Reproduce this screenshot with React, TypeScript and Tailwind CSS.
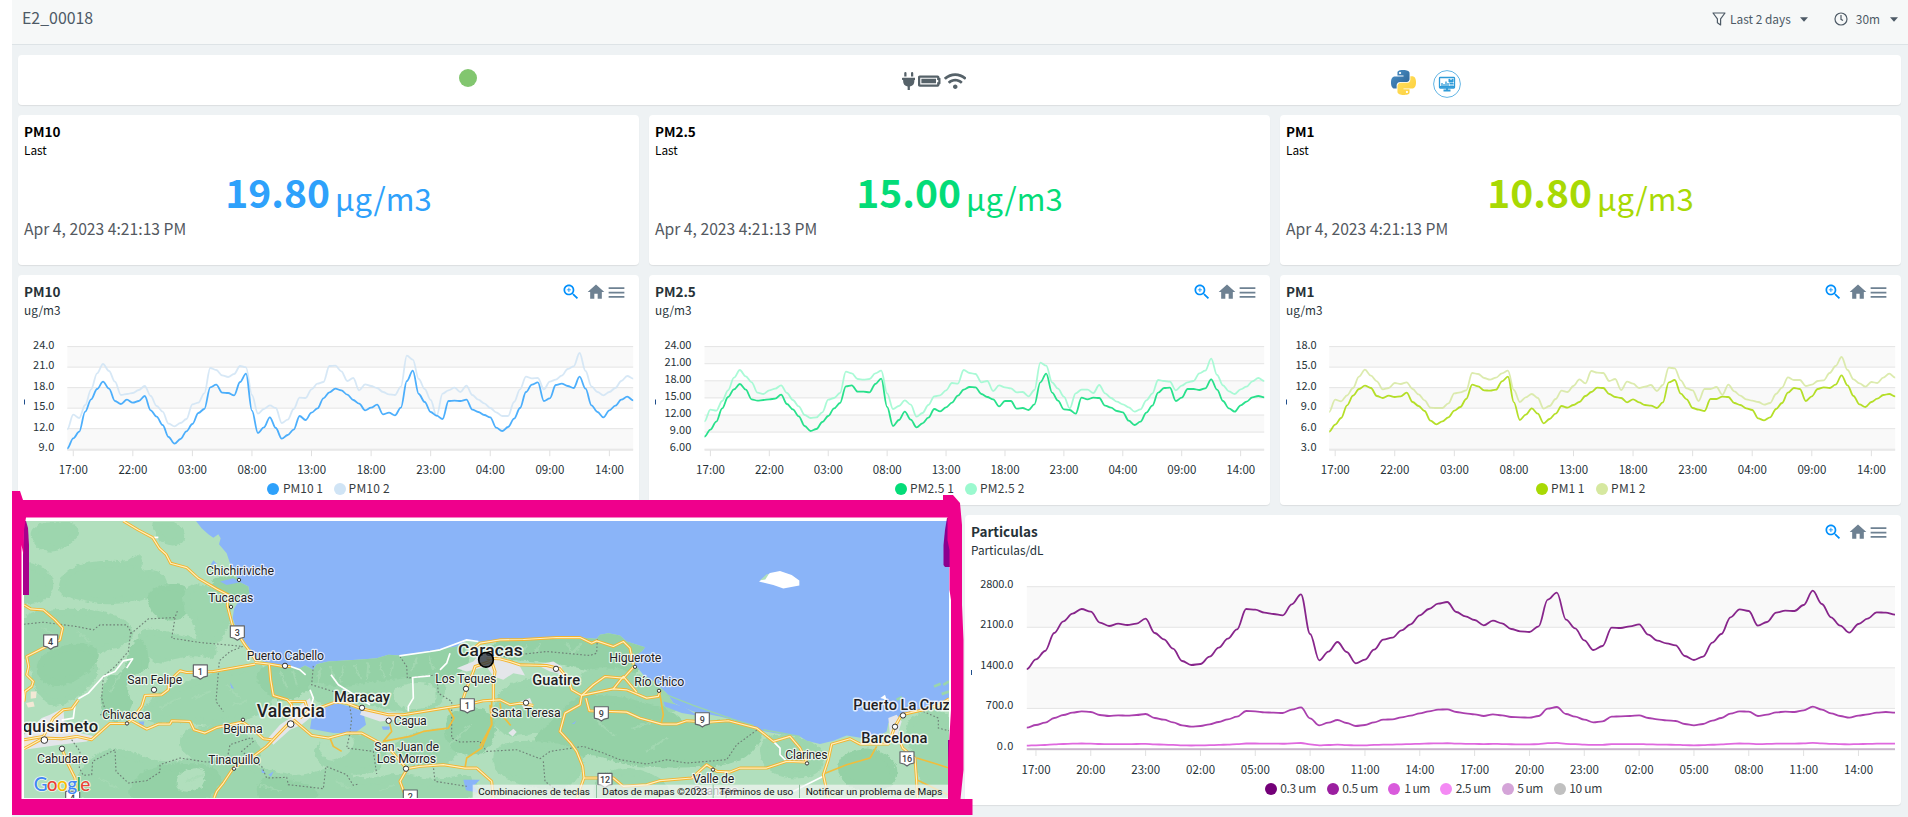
import React from 'react';
import { FaPlug, FaBatteryFull, FaWifi } from 'react-icons/fa';

const FONT = "font-['Noto_Sans_CJK_SC','Noto_Sans',sans-serif]";

/* Sample heights are in thirds of a pixel, measured down from the plot origin. */
const pm10a = [550,520,500,440,403,372,350,371,408,417,404,413,408,393,436,455,480,516,536,522,499,477,444,432,367,359,383,384,391,351,326,437,504,487,457,489,521,510,494,453,465,443,430,400,382,371,376,389,405,416,436,428,419,448,443,451,428,348,317,387,411,441,452,462,408,407,408,404,434,441,450,457,488,498,486,461,429,381,359,352,408,400,360,356,363,369,335,371,421,441,457,436,422,404,395,406];
const pm10b = [493,449,459,420,373,325,297,318,350,390,387,384,375,363,393,423,440,476,484,474,462,418,413,385,309,315,331,336,327,303,307,390,446,432,421,429,474,464,432,398,399,373,356,351,303,302,319,348,339,376,358,363,369,381,388,390,365,272,284,342,372,405,453,386,376,368,381,362,390,404,415,429,442,453,453,411,373,335,340,339,373,350,344,332,312,304,264,318,364,381,391,381,369,348,333,341];
const pm25a = [515,494,470,430,396,373,357,374,403,407,405,403,401,389,417,433,454,483,498,492,471,453,430,414,364,361,380,380,382,357,341,426,483,465,440,464,487,475,458,432,439,427,413,392,374,366,367,387,396,403,424,408,408,431,429,435,418,352,326,383,407,433,435,446,398,403,398,399,422,428,438,442,467,480,470,443,422,383,369,368,408,398,372,372,375,370,343,374,408,430,440,421,410,397,393,397];
const pm25b = [469,434,437,408,376,338,315,334,352,383,387,376,371,361,384,405,424,450,459,457,442,404,399,384,320,325,342,344,342,325,317,385,432,423,406,419,455,444,420,394,391,376,354,356,315,324,327,352,348,378,361,367,370,382,381,394,375,293,302,352,371,395,430,385,374,374,384,360,385,399,410,418,427,440,433,406,386,345,348,350,376,362,352,348,325,317,281,330,361,379,387,373,365,349,339,348];
const pm1a = [500,479,459,421,392,372,362,369,393,399,392,396,394,383,411,423,438,467,478,469,457,437,426,402,359,364,376,377,374,349,335,412,465,449,430,446,475,462,446,423,428,420,411,393,381,368,369,387,396,399,412,403,412,420,422,429,412,352,345,386,403,429,434,438,402,402,395,396,414,420,430,435,460,466,457,432,414,383,369,372,408,394,372,367,369,359,331,361,393,418,426,411,401,390,387,394];
const pm1b = [441,404,409,391,369,335,314,332,349,373,369,354,357,352,372,388,406,428,429,429,415,385,382,376,324,327,339,344,338,325,317,375,411,397,387,399,431,423,402,377,381,363,343,355,318,323,324,348,342,375,350,356,369,365,360,378,360,308,310,346,370,376,408,372,372,366,389,359,379,392,403,407,411,419,414,387,368,337,345,345,363,359,348,346,324,303,276,315,343,355,365,351,354,338,326,338];
const part3 = [507,478,453,399,364,341,327,335,368,378,371,375,371,356,399,418,446,483,495,492,470,443,416,388,327,329,338,342,346,313,283,402,481,455,426,456,490,479,449,419,413,391,373,346,327,311,306,336,349,360,376,362,370,387,394,396,379,299,278,359,385,421,450,438,383,384,379,373,404,422,430,436,468,480,470,428,402,352,328,333,377,366,338,332,333,315,272,312,352,377,398,372,356,337,338,344];
const part5 = [683,675,668,654,645,638,634,636,645,648,646,647,645,642,654,659,667,676,680,678,673,666,658,650,633,634,637,638,639,629,622,655,676,668,660,669,678,675,667,659,658,652,647,640,634,629,628,636,640,643,648,643,646,651,652,653,648,626,621,642,650,659,667,664,650,649,648,646,654,658,661,663,672,676,672,662,654,641,634,635,648,644,637,635,636,631,620,629,640,648,653,647,643,638,636,638];
const part10 = part5.map((v) => 745 - (745 - v) * 0.13);

type Series = { color: string; data: number[]; opacity?: number };
type Legend = { label: string; color: string; cx: number; tx: number; w: number };
type ChartProps = {
  title: string;
  unit: string;
  width: number;
  height: number;
  x0: number;
  x1: number;
  top: number;
  bottom: number;
  shift: number;
  yLabels: string[];
  yRight: number;
  yWidth: number;
  yDrop: number;
  xLabels: string[];
  every: number;
  series: Series[];
  legend: Legend[];
  legendY: number;
  mark: number;
};

function smooth(data: number[], x0: number, x1: number, shift: number) {
  const step = (x1 - x0) / (data.length - 1);
  const pt = (i: number) => [x0 + i * step, data[i] / 3 - shift];
  let d = `M${pt(0)[0].toFixed(2)} ${pt(0)[1].toFixed(2)}`;
  for (let i = 1; i < data.length; i++) {
    const [ax, ay] = pt(i - 1);
    const [bx, by] = pt(i);
    const k = step * 0.35;
    d += `C${(ax + k).toFixed(2)} ${ay.toFixed(2)} ${(bx - k).toFixed(2)} ${by.toFixed(2)} ${bx.toFixed(2)} ${by.toFixed(2)}`;
  }
  return d;
}

function Card({ className = '', children }: { className?: string; children?: React.ReactNode }) {
  return <section className={`rounded-[4px] bg-white shadow-[0_1px_1px_rgba(0,0,0,0.08)] ${className}`}>{children}</section>;
}

function Toolbox() {
  return (
    <div className="flex items-start pt-[7px] pr-[12.5px]">
      <svg className="mr-[5px] size-5 fill-[#008ffb]" viewBox="0 0 24 24">
        <path d="M15.5 14h-.79l-.28-.27C15.41 12.59 16 11.11 16 9.5 16 5.91 13.09 3 9.5 3S3 5.91 3 9.5 5.91 16 9.5 16c1.61 0 3.09-.59 4.23-1.57l.27.28v.79l5 4.99L20.49 19l-4.99-5zm-6 0C7.01 14 5 11.99 5 9.5S7.01 5 9.5 5 14 7.01 14 9.5 11.99 14 9.5 14zM12 10h-2v2H9v-2H7V9h2V7h1v2h2v1z" />
      </svg>
      <svg className="size-5 fill-[#6e8192]" viewBox="0 0 24 24">
        <path d="M10 20v-6h4v6h5v-8h3L12 3 2 12h3v8z" />
      </svg>
      <svg className="size-[21px] fill-[#6e8192]" viewBox="0 0 24 24">
        <path d="M3 18h18v-2H3v2zm0-5h18v-2H3v2zm0-7v2h18V6H3z" />
      </svg>
    </div>
  );
}

function ChartCard(p: ChartProps) {
  const rows = p.yLabels.length - 1;
  const rowH = (p.bottom - p.top) / rows;
  const step = (p.x1 - p.x0) / 95;
  return (
    <Card className="flex flex-col overflow-hidden">
      <div className="flex h-[50px] shrink-0 justify-between pl-[6px] text-[#263238]">
        <div className="flex flex-col">
          <h2 className="mt-[6px] text-[13.500px] leading-[20px] font-bold">{p.title}</h2>
          <p className="text-[11.800px] leading-[17px]">{p.unit}</p>
        </div>
        <Toolbox />
      </div>
      <svg width={p.width} height={p.height - 50} viewBox={`0 50 ${p.width} ${p.height - 50}`}>
        {p.yLabels.map((_, i) =>
          i < rows && i % 2 === 0 ? (
            <rect key={i} x={p.x0} y={p.top + i * rowH} width={p.x1 - p.x0} height={rowH} fill="#f9f9f9" />
          ) : null,
        )}
        {p.yLabels.map((_, i) => (
          <line key={i} x1={p.x0} x2={p.x1} y1={p.top + i * rowH} y2={p.top + i * rowH} stroke="#e4e4e4" />
        ))}
        <line x1={p.x0} x2={p.x1} y1={p.bottom + 0.9} y2={p.bottom + 0.9} stroke="#e0e0e0" />
        {p.xLabels.map((l, i) => {
          const x = p.x0 + step * (1 + i * p.every);
          return (
            <g key={i}>
              <line x1={x} x2={x} y1={p.bottom + 1} y2={p.bottom + 7} stroke="#e0e0e0" />
              <text x={x + 0.1} y={p.bottom + 24.6} fontSize="11.5" textAnchor="middle" textLength="29" fill="#263238">{l}</text>
            </g>
          );
        })}
        {p.yLabels.map((l, i) => (
          <text key={i} x={p.yRight} y={p.top + i * rowH + p.yDrop} fontSize="11" textAnchor="end" textLength={l.length * p.yWidth} fill="#263238">{l}</text>
        ))}
        <rect x="6" y={p.mark} width="1" height="5" fill="#1f4e8c" />
        {p.series.map((s, i) => (
          <path key={i} d={smooth(s.data, p.x0, p.x1, p.shift)} fill="none" stroke={s.color} strokeWidth="1.8" strokeOpacity={s.opacity ?? 0.85} />
        ))}
        {p.legend.map((l) => (
          <g key={l.label}>
            <circle cx={l.cx} cy={p.legendY} r="6" fill={l.color} />
            <text x={l.tx} y={p.legendY + 4} fontSize="12" textLength={l.w} fill="#373d3f">{l.label}</text>
          </g>
        ))}
      </svg>
    </Card>
  );
}

function ValueCard({ title, value, color }: { title: string; value: string; color: string }) {
  return (
    <Card className="flex flex-col px-[6px] text-black">
      <h2 className="mt-[6px] text-[13.500px] leading-[20px] font-bold">{title}</h2>
      <p className="text-[11.800px] leading-[17px]">Last</p>
      <div className={`mt-[13px] flex h-[40px] items-baseline justify-center ${color}`}>
        <span className="text-[39px] leading-[40px] font-bold">{value}</span>
        <span className="relative top-[3px] ml-[5px] text-[31px] leading-[40px]">µg/m3</span>
      </div>
      <p className="mt-[6px] text-[15.700px] leading-[24px] text-[#54595f]">Apr 4, 2023 4:21:13 PM</p>
    </Card>
  );
}

const R = 1440;
const off = (s: string) =>
  s.split(' ').map((q) => { const [x, y] = q.split(','); return `${+x + R},${y}`; }).join(' ');

/* Closed curve through the midpoints of a polygon's sides. */
function blob(points: string) {
  const p = points.split(' ').map((q) => q.split(',').map(Number));
  const mid = (a: number[], b: number[]) => `${(a[0] + b[0]) / 2} ${(a[1] + b[1]) / 2}`;
  let d = `M${mid(p[p.length - 1], p[0])}`;
  p.forEach((q, i) => { d += `Q${q[0]} ${q[1]} ${mid(q, p[(i + 1) % p.length])}`; });
  return d + 'Z';
}

const greens: [string, string][] = [
  ['#9dd6ae', '200,260 290,235 390,240 420,210 410,270 470,262 500,300 450,330 380,345 300,350 220,330 180,320'],
  ['#94d1a6', '450,330 490,305 560,310 560,370 540,398 480,395 455,360'],
  ['#9dd6ae', '465,108 530,120 548,160 520,175 480,160 470,130'],
  ['#9dd6ae', '560,300 650,320 690,340 680,420 640,480 600,470 590,400 560,380'],
  ['#94d1a6', '640,280 740,290 760,325 700,345 650,310'],
  ['#9dd6ae', '60,230 140,260 155,310 120,345 60,350'],
  ['#9dd6ae', '90,130 200,115 240,140 180,190 120,190'],
  ['#9dd6ae', '60,395 180,380 300,385 390,420 390,470 250,510 300,560 220,640 150,660 110,600 100,520 60,500'],
  ['#9dd6ae', '420,430 540,460 640,480 640,520 500,540 430,500'],
  ['#94d1a6', '120,520 220,480 300,500 260,560 180,600 120,580'],
  ['#94d1a6', '315,590 390,540 400,480 430,470 440,560 400,620 370,700 310,700'],
  ['#9dd6ae', '440,650 560,600 650,570 745,550 810,550 820,640 780,680 720,700 640,720 560,700 440,710'],
  ['#94d1a6', '760,550 935,540 1000,535 1090,512 1200,508 1330,495 1400,480 1400,540 1330,580 1200,600 1100,615 1000,620 930,600 870,640 810,630'],
  ['#9dd6ae', '925,590 1000,620 1130,600 1230,590 1320,570 1330,620 1300,670 1200,675 1090,645 960,660'],
  ['#94d1a6', '1480,470 1680,455 1780,460 1850,438 1940,480 1920,510 1900,580 1760,545 1640,520 1500,515'],
  ['#9dd6ae', '1520,590 1740,590 1750,640 1710,710 1600,740 1510,745 1480,700'],
  ['#9dd6ae', '1740,560 1880,560 1980,610 2040,680 1900,670 1750,640'],
  ['#94d1a6', '1730,640 1840,640 2000,680 2060,730 2200,710 2290,730 2250,800 2180,835 1980,840 1860,830 1760,790 1710,840 1580,790 1680,700'],
  ['#9dd6ae', '270,830 350,790 480,850 640,820 760,850 900,890 1000,850 1080,900 1200,870 1300,900 1420,870 1430,960 220,960 240,880'],
  ['#94d1a6', '430,860 560,840 660,860 640,930 500,960 380,940'],
  ['#94d1a6', '780,880 900,900 960,930 900,960 780,950'],
  ['#9dd6ae', '550,740 680,730 790,790 750,840 640,840 550,800'],
  ['#9dd6ae', '930,790 1050,745 1160,790 1130,860 1000,860'],
  ['#9dd6ae', '1170,770 1360,730 1370,830 1240,840'],
  ['#94d1a6', '1350,680 1480,680 1470,790 1390,810 1340,760'],
  ['#9dd6ae', '1490,770 1750,790 1730,890 1640,910 1490,870'],
  ['#9dd6ae', '2290,750 2450,775 2470,850 2380,880 2290,840'],
  ['#94d1a6', '2510,830 2600,790 2690,840 2670,910 2550,910'],
  ['#9dd6ae', '2720,700 2860,670 2860,940 2780,910 2740,800'],
  ['#9dd6ae', '1790,880 1900,850 2010,910 1970,960 1790,960'],
  ['#b1dfbd', '380,600 440,560 560,520 650,530 560,560 460,620 420,670'],
  ['#b1dfbd', '960,765 1060,755 1040,805 980,825'],
  ['#b1dfbd', '320,500 380,500 360,560 320,560'],
  ['#b1dfbd', '540,870 610,855 600,905 540,915'],
  ['#b1dfbd', '1180,610 1300,600 1300,660 1200,665'],
];

const borders = [
  '72,418 130,412 230,425 280,435 300,420 380,420 395,445 445,402 525,398 533,376',
  '525,400 515,460 600,473 700,482 728,485 690,500 658,528 652,600 648,650 670,680',
  '392,442 385,500 345,545 310,575 305,640 320,690 300,690',
  '215,765 240,800 238,850 250,872 275,870 278,830 345,795 348,860 385,895 440,888 480,862 480,840 540,820 620,832 680,830 690,780 755,758 760,770 725,800 785,845 800,880 860,878 865,900 970,912 978,845 1040,870 1060,902 1075,898',
  '940,543 935,600 1000,620 1045,640 1055,700 1050,745 1040,790 1120,800 1130,868',
  '1200,515 1220,545 1222,580 1310,570 1315,625 1355,650 1355,760 1380,772 1440,770 1460,800 1550,795 1620,822 1650,800 1750,785 1810,805 1860,825 1940,838 2000,825 2060,835 2180,825 2210,780 2272,735',
  '1500,516 1640,500 1770,512 1790,505 1792,460',
  '1630,830 1635,890 1680,925',
  '2770,680 2815,700 2815,730 2847,738',
  '1240,845 1300,845 1305,890 1400,905',
];

const roads = [
  '370,108 415,135 458,158 478,190 498,208 512,235 560,248 595,280 650,312 685,330 682,362 697,420 712,445 735,480 750,500 768,528',
  '765,538 640,560 560,563 540,558 505,592 505,615 485,630 435,632 425,665 395,705 380,716 330,716 275,765 230,755 185,762 130,760 72,792',
  '395,708 440,733 475,718 510,718 515,708 570,710 582,735 615,745 650,728 728,712 760,735 790,762 815,765',
  '765,533 810,538 850,545 872,545',
  '808,540 812,585 820,632 862,645 875,660 870,700',
  '865,650 915,650 925,680 900,700',
  '930,680 1005,652 1040,655 1085,672 1165,690 1210,690 1345,668 1400,660 1450,648 1500,645 1530,660 1560,655 1600,662',
  '870,712 800,785 760,815 700,850 670,895 650,920 642,940',
  '880,705 935,752 985,760 1040,745 1085,745 1150,780 1175,800 1220,852 1260,845 1330,840 1395,850 1430,850 1475,890 1480,940',
  '1220,855 1200,890 1215,930 1235,940',
  '72,360 92,372 130,375 165,405 188,430 180,465 125,492 80,515 86,545 80,570 100,590 95,605 75,620 72,650',
  '72,765 130,755 160,700 190,675 215,672 235,645',
  '185,790 205,840 225,880 230,940',
  off('-30,500 0,475 60,465 130,464 230,458 300,458 335,475 350,468 400,485 430,470 450,490 460,540'),
  off('20,520 60,522 90,530 120,540 200,542 240,552 258,575 268,592 275,615 305,632 400,612 440,615 500,640 535,635 540,618'),
  off('305,632 340,600 375,575 430,580 462,545'),
  off('400,612 430,575 470,622'),
  off('318,640 328,678 440,682 480,700 545,718 590,718 620,708 690,712 745,708 830,730 880,770 930,755 960,790 980,832'),
  off('305,632 300,660 255,685 240,740 272,775 290,800 308,845 312,880 290,940'),
  off('312,880 400,880 430,905 500,900 540,888 635,880 680,840 710,860 750,862 780,850 860,850 920,830 980,832'),
  off('1045,940 1030,870 1045,825 1055,778 1110,762 1140,778 1225,778 1245,725 1265,690 1330,675 1380,660 1407,642'),
  off('1262,775 1268,790 1305,820 1310,890 1312,940'),
  '1470,530 1425,545 1420,560 1400,610 1390,640',
  '1475,530 1485,560 1480,600 1480,650',
];

const thinRoads = [
  '1475,650 1475,720 1445,790 1400,820 1395,850',
  '1165,700 1175,740 1150,770 1230,755 1270,740 1345,730 1362,700 1345,672',
  '990,760 1000,785 1025,800',
  off('540,630 550,690 543,718'),
  off('1310,820 1360,835 1407,850'),
  off('1030,868 1100,840 1170,820 1190,785'),
  off('1310,885 1407,932'),
  off('30,660 35,720 0,785'),
  off('60,655 65,690 92,722'),
];

const whiteRoads = [
  '235,642 265,625 310,575 345,560 370,528 398,522 380,550',
  '185,706 220,700 225,660',
  '1198,513 1290,500 1320,495 1400,465 1435,470',
  '993,570 1015,600 1060,628 1110,660',
  '872,545 900,555 917,570',
  '1350,505 1340,535 1320,555',
  '1225,680 1225,665 1240,640 1238,578 1290,573',
  '930,615 940,640 925,690',
  '455,158 475,157',
  off('880,770 900,790 900,810 920,830'),
  off('1030,875 970,905 930,925'),
];

const places: [string, number, number, number, number][] = [
  ['Chichiriviche', 618, 270, 204, 37], ['Tucacas', 625, 352, 135, 37], ['Puerto Cabello', 740, 526, 232, 37],
  ['San Felipe', 382, 597, 165, 37], ['Chivacoa', 307, 703, 145, 37], ['Bejuma', 670, 745, 118, 37],
  ['Tinaquillo', 625, 838, 155, 37], ['Cabudare', 111, 835, 153, 37], ['Cagua', 1181, 721, 99, 37],
  ['San Juan de', 1123, 798, 194, 37], ['Los Morros', 1130, 835, 178, 37], ['Los Teques', 1306, 594, 183, 37],
  ['Higuerote', 1828, 531, 156, 37], ['Río Chico', 1903, 603, 150, 37], ['Santa Teresa', 1474, 696, 208, 37],
  ['Clarines', 2356, 822, 127, 37], ['Valle de', 2078, 894, 125, 37], ['Guanape', 2078, 931, 135, 37],
];
const cities: [string, number, number, number, number][] = [
  ['Maracay', 1002, 651, 168, 44], ['Valencia', 770, 696, 204, 53], ['quisimeto', 68, 742, 227, 50],
  ['Caracas', 1374, 514, 194, 52], ['Guatire', 1597, 600, 143, 44], ['Barcelona', 2584, 774, 198, 44],
  ['Puerto La Cruz', 2560, 675, 290, 44],
];
const dots: [number, number, number][] = [
  [717, 285, 5], [693, 366, 5], [855, 543, 8], [462, 615, 8], [381, 716, 5], [729, 705, 5], [872, 718, 10], [702, 852, 5],
  [133, 766, 10], [186, 792, 8], [1086, 669, 8], [1166, 708, 8], [1218, 852, 8], [1398, 612, 8], [1668, 552, 8],
  [1905, 546, 5], [1977, 618, 5], [1578, 654, 8], [2421, 836, 5], [2139, 855, 5], [2709, 692, 8], [2685, 726, 8],
];
const shields: [string, number, number][] = [
  ['4', 152, 470], ['3', 712, 443], ['1', 601, 560], ['1', 1402, 662], ['9', 1804, 686], ['9', 2107, 704],
  ['16', 2721, 821], ['12', 1815, 886], ['2', 1231, 936], ['4', 218, 940],
];

function MapView() {
  return (
    <svg width="925" height="277" viewBox="72 108 2775 832" preserveAspectRatio="none" className="block" fontFamily="Roboto, sans-serif">
      <rect x="72" y="108" width="2775" height="832" fill="#8ab4f8" />
      <filter id="rough" x="0" y="0" width="1" height="1">
        <feTurbulence type="fractalNoise" baseFrequency="0.07" numOctaves="3" seed="4" />
        <feDisplacementMap in="SourceGraphic" scale="16" xChannelSelector="R" yChannelSelector="G" />
      </filter>
      <clipPath id="land">
        <path d="M60 100L588 108L605 130L625 148L640 158L655 148L662 160L657 178L680 205L690 235L705 260L715 290L745 305L748 325L718 345L702 372L698 400L712 440L740 480L765 510L790 530L850 542L900 550L915 542L940 555L950 538L985 530L1083 524L1130 520L1165 510L1200 512L1300 497L1370 485L1400 466L1440 470L1500 463L1680 456L1740 458L1790 462L1800 450L1825 445L1860 452L1880 470L1935 487L1925 500L1905 512L1905 540L1930 570L1965 592L2000 625L2020 655L2080 680L2160 695L2200 706L2270 735L2320 745L2400 755L2420 768L2460 778L2500 768L2540 752L2600 762L2640 752L2660 740L2665 715L2690 700L2730 682L2790 668L2820 652L2847 645V950H60Z" />
      </clipPath>
      <g clipPath="url(#land)">
        <rect x="60" y="100" width="2800" height="850" fill="#b1dfbd" />
        <g filter="url(#rough)">
          {greens.map(([c, pts], i) => (
            <path key={i} d={blob(pts)} fill={c} stroke={c} strokeWidth="20" strokeLinejoin="round" />
          ))}
          <g stroke="#a6dab5" strokeWidth="6" fill="none" opacity="0.7" strokeLinecap="round">
            <path d="M840 560l20 45M880 560l10 40M960 555l-8 40M990 548l16 44M1030 545l-8 46M1065 540l16 44M1105 535l-4 48M1140 535l12 40M1180 530l-8 44M1250 520l-16 40M1290 515l8 36M1580 480l-20 30M1620 480l-14 26M1700 475l16 30M1740 480l-18 22M130 430l30 20M230 440l40 30M330 620l30-50M480 670l60-30M580 640l50-20M680 600l40 40M700 660l40-10M1780 700l60 50M1900 730l60-20M2000 760l-60 40M1350 780l60-60M560 890l50-20M780 900l60 20M1010 890l40 20M1180 900l-40 20M300 880l50 30" />
          </g>
        </g>
      </g>
      <polygon points="935,700 950,685 965,665 1010,655 1060,668 1090,682 1098,720 1065,745 1000,745 930,732" fill="#8ab4f8" />
      <g fill="#8ab4f8">
        <path d="M632 240l8-14 12 12zM660 290l40-10 20 12-40 8zM415 710h18l-4 22zM690 592l12 20-8-2zM785 852l12 14-12-2zM805 870l16-10-8 16zM1390 885h50l-20 20 18 20-40-8zM1145 725h26l-4 10h-18zM1990 650l60 15 45 28-50-8-50-20zM1715 718l14-10-6 10z" />
      </g>
      <path d="M2000 630L2080 662L2200 704L2260 722M2290 735L2400 755" stroke="#9ad5ac" strokeWidth="4" fill="none" />
      <path d="M2802 605l20-8M2830 600l17-10M2825 628l22-8M2690 645l16-8" stroke="#9ad5ac" strokeWidth="8" />
      <g fill="#e4e6ea">
        <polygon points="805,760 840,720 870,700 895,665 930,640 942,690 905,720 870,735 820,780" />
        <polygon points="72,750 125,700 150,690 190,670 195,735 285,755 260,770 180,780 72,795" />
        <polygon points="1370,550 1420,530 1440,505 1490,515 1540,530 1560,545 1575,572 1540,565 1510,585 1480,575 1460,545 1400,560" />
        <polygon points="1080,690 1090,665 1130,680 1200,685 1190,705 1140,710" />
        <polygon points="1610,540 1660,530 1685,545 1690,570 1650,560" />
        <polygon points="1560,650 1590,640 1600,665 1570,670" />
        <polygon points="1525,745 1540,732 1550,742 1538,755" />
        <polygon points="2665,700 2690,690 2705,710 2690,760 2710,775 2670,750" />
      </g>
      <polygon points="2641,640 2655,630 2660,645" fill="#fff" />
      <g fill="#f3e8d5">
        <polygon points="92,620 110,620 108,640 92,642" />
        <polygon points="78,655 100,650 104,665 84,668" />
        <polygon points="72,765 98,772 90,792 72,795" />
      </g>
      <polygon points="2277,290 2310,264 2340,258 2375,270 2398,287 2398,302 2350,311 2320,300" fill="#fff" />
      <polygon points="2280,286 2300,268 2306,268 2296,284" fill="#b1dfbd" />
      <g fill="none" stroke="#6f8177" strokeWidth="3.4" strokeDasharray="5 6">
        {borders.map((b, i) => <polyline key={i} points={b} />)}
      </g>
      <g fill="none" strokeLinejoin="round">
        {whiteRoads.map((b, i) => <polyline key={i} points={b} stroke="#fff" strokeWidth="5" />)}
        {thinRoads.map((b, i) => <polyline key={i} points={b} stroke="#f0bd3c" strokeWidth="5" />)}
        {roads.map((b, i) => <polyline key={i} points={b} stroke="#f3b32f" strokeWidth="9" />)}
        {roads.map((b, i) => <polyline key={i} points={b} stroke="#fff0bd" strokeWidth="3.6" />)}
      </g>
      {dots.map(([x, y, r], i) => <circle key={i} cx={x} cy={y} r={r} fill="#fff" stroke="#333" strokeWidth="3" />)}
      {shields.map(([t, x, y], i) => (
        <g key={i}>
          <path d={`M${x - 21} ${y - 20}h42v34l-12 3l-9 6l-9 -6l-12 -3z`} fill="#fff" stroke="#5f6368" strokeWidth="3.5" strokeLinejoin="round" />
          <text x={x} y={y + 10} fontSize="27" textAnchor="middle" fill="#3c4043" fontWeight="500">{t}</text>
        </g>
      ))}
      <g fill="#1f2124" stroke="#fff" strokeOpacity="0.75" strokeLinejoin="round" style={{ paintOrder: 'stroke' }}>
        {places.map(([t, x, y, w, s]) => <text key={t} x={x} y={y} fontSize={s} textLength={w} strokeWidth="7">{t}</text>)}
        {cities.map(([t, x, y, w, s]) => <text key={t} x={x} y={y} fontSize={s} textLength={w} fontWeight="500" strokeWidth="9">{t}</text>)}
      </g>
      <circle cx="1458" cy="525" r="22" fill="#263038" fillOpacity="0.78" stroke="#000" strokeWidth="5" />
      <text x="101" y="920" fontSize="57" textLength="170" fontFamily="Lato, sans-serif" stroke="#fff" strokeWidth="5" strokeOpacity="0.8" style={{ paintOrder: 'stroke' }} fontWeight="500">
        <tspan fill="#4285f4">G</tspan><tspan fill="#ea4335">o</tspan><tspan fill="#fbbc04">o</tspan><tspan fill="#4285f4">g</tspan><tspan fill="#34a853">l</tspan><tspan fill="#ea4335">e</tspan>
      </text>
      <rect x="1418" y="900" width="1429" height="40" fill="#f5f5f5" fillOpacity="0.7" />
      <g fill="#8fbf9f"><rect x="1788" y="900" width="3" height="40" /><rect x="2138" y="900" width="3" height="40" /><rect x="2397" y="900" width="3" height="40" /></g>
      <g fill="#111" fontSize="30">
        <text x="1435" y="930" textLength="335">Combinaciones de teclas</text>
        <text x="1807" y="930" textLength="315">Datos de mapas ©2023</text>
        <text x="2158" y="930" textLength="222">Términos de uso</text>
        <text x="2417" y="930" textLength="410">Notificar un problema de Maps</text>
      </g>
    </svg>
  );
}

function Highlight() {
  return (
    <svg className="pointer-events-none absolute top-0 left-0" width="980" height="817" viewBox="0 0 980 817">
      <path d="M24 521L26 521L28 528L29 545V595H23V545Z" fill="#a8008c" />
      <path d="M947 518H950V567H945L943.5 565V545L945 530Z" fill="#8b008f" />
      <path d="M948 740H950V799H948Z" fill="#a0008c" />
      <path
        fillRule="evenodd"
        fill="#ef008c"
        d="M12 491H20L23 500H943V495H953L960 503L962 525V605L963.500 640V770L960.500 799H972.500V815H12ZM26 517.500L24 530L23.500 555L21.500 545V799H948V765L949.500 735L951 710V600L949.500 590L949.500 550L947.500 540V517.500Z"
      />
    </svg>
  );
}

function StatusBar() {
  return (
    <Card className="flex h-[50px] items-start">
      <div className="mt-[14px] ml-[440.500px] size-[18px] rounded-full bg-[#82c66f]" />
      <div className="mt-[17px] ml-[425px] flex gap-[3px] text-[#566269]">
        <FaPlug className="h-[18px] w-[13.500px]" />
        <FaBatteryFull className="h-[18px] w-[22.500px]" />
        <FaWifi className="h-[18px] w-[22.500px]" />
      </div>
      <svg className="mt-[15px] ml-[425px]" width="25" height="27" viewBox="0 0 24 26">
        <defs>
          <linearGradient id="pyb" x1="0" y1="0" x2="1" y2="1"><stop offset="0" stopColor="#4b93cc" /><stop offset="1" stopColor="#2b5f8e" /></linearGradient>
          <linearGradient id="pyy" x1="0" y1="0" x2="1" y2="1"><stop offset="0" stopColor="#ffe061" /><stop offset="1" stopColor="#fdcf3a" /></linearGradient>
        </defs>
        <path fill="url(#pyb)" d="M14.25.18l.9.2.73.26.59.3.45.32.34.34.25.34.16.33.1.3.04.26.02.2-.01.13V8.5l-.05.63-.13.55-.21.46-.26.38-.3.31-.33.25-.35.19-.35.14-.33.1-.3.07-.26.04-.21.02H8.77l-.69.05-.59.14-.5.22-.41.27-.33.32-.27.35-.2.36-.15.37-.1.35-.07.32-.04.27-.02.21v3.06H3.17l-.21-.03-.28-.07-.32-.12-.35-.18-.36-.26-.36-.36-.35-.46-.32-.59-.28-.73-.21-.88-.14-1.05-.05-1.23.06-1.22.16-1.04.24-.87.32-.71.36-.57.4-.44.42-.33.42-.24.4-.16.36-.1.32-.05.24-.01h.16l.06.01h8.16v-.83H6.18l-.01-2.75-.02-.37.05-.34.11-.31.17-.28.25-.26.31-.23.38-.2.44-.18.51-.15.58-.12.64-.1.71-.06.77-.04.84-.02 1.27.05zm-6.3 1.98l-.23.33-.08.41.08.41.23.34.33.22.41.09.41-.09.33-.22.23-.34.08-.41-.08-.41-.23-.33-.33-.22-.41-.09-.41.09z" />
        <path fill="url(#pyy)" d="M21.04 6.11l.28.06.32.12.35.18.36.27.36.35.35.47.32.59.28.73.21.88.14 1.04.05 1.23-.06 1.23-.16 1.04-.24.86-.32.71-.36.57-.4.45-.42.33-.42.24-.4.16-.36.09-.32.05-.24.02-.16-.01h-8.22v.82h5.84l.01 2.76.02.36-.05.34-.11.31-.17.29-.25.25-.31.24-.38.2-.44.17-.51.15-.58.13-.64.09-.71.07-.77.04-.84.01-1.27-.04-1.07-.14-.9-.2-.73-.25-.59-.3-.45-.33-.34-.34-.25-.34-.16-.33-.1-.3-.04-.25-.02-.2.01-.13v-5.34l.05-.64.13-.54.21-.46.26-.38.3-.32.33-.24.35-.2.35-.14.33-.1.3-.06.26-.04.21-.02.13-.01h5.84l.69-.05.59-.14.5-.21.41-.28.33-.32.27-.35.2-.36.15-.36.1-.35.07-.32.04-.28.02-.21V6.07h2.09l.14.01zm-6.47 14.25l-.23.33-.08.41.08.41.23.33.33.23.41.08.41-.08.33-.23.23-.33.08-.41-.08-.41-.23-.33-.33-.23-.41-.08-.41.08z" />
      </svg>
      <svg className="mt-[15px] ml-[17px]" width="28" height="28" viewBox="0 0 28 28" fill="none">
        <circle cx="14" cy="14" r="13.400" stroke="#62b5e5" />
        <rect x="6.500" y="7.500" width="15" height="10.500" rx="0.800" stroke="#2f9bd8" strokeWidth="1.300" />
        <path d="M6.500 16.800h15M14 18v2.500M10.500 20.500h7" stroke="#2f9bd8" strokeWidth="1.800" />
        <path d="M9 16v-3M11 16v-2M13 16v-4.500M15 16v-3" stroke="#2f9bd8" strokeWidth="1.300" />
        <path d="M16 9v3h4v-3l-2 1.500zM16.500 13.500h4M16.500 15h4" stroke="#2f9bd8" fill="#2f9bd8" />
      </svg>
    </Card>
  );
}

const fiveHours = ['17:00', '22:00', '03:00', '08:00', '13:00', '18:00', '23:00', '04:00', '09:00', '14:00'];
const threeHours = ['17:00', '20:00', '23:00', '02:00', '05:00', '08:00', '11:00', '14:00', '17:00', '20:00', '23:00', '02:00', '05:00', '08:00', '11:00', '14:00'];
const small = { unit: 'ug/m3', width: 621, height: 230, top: 71.6, bottom: 174.2, shift: 10, every: 10, xLabels: fiveHours, legendY: 214, mark: 124.5, yDrop: 1.9 };

export default function App() {
  return (
    <div className={`relative h-[817px] w-[1908px] overflow-hidden bg-white pl-[12px] ${FONT}`}>
      <div className="flex h-full flex-col bg-[#eef2f4]">
        <header className="flex h-[45px] shrink-0 items-start border-b border-[#dde3e6] bg-[#f6f8f8] pl-[10px] text-[#4d5a66]">
          <h1 className="mt-[6px] text-[15.900px] leading-[24px]">E2_00018</h1>
          <div className="ml-auto flex h-[38px] items-center pr-[10px] text-[11.900px]">
            <svg className="mr-[4px]" width="14" height="14" viewBox="0 0 14 14" fill="none" stroke="currentColor" strokeWidth="1.200" strokeLinejoin="round"><path d="M1 1h12L8.600 6.800V13L5.400 10.800V6.800z" /></svg>
            <span>Last 2 days</span>
            <svg className="ml-[9px]" width="8" height="5" viewBox="0 0 8 5" fill="currentColor"><path d="M0 .3h8L4 4.700z" /></svg>
            <svg className="ml-[26px]" width="14" height="14" viewBox="0 0 14 14" fill="none" stroke="currentColor" strokeWidth="1.200"><circle cx="7" cy="7" r="6" /><path d="M7 3v4.300l2 1.200" /></svg>
            <span className="ml-[8px]">30m</span>
            <svg className="ml-[10px]" width="8" height="5" viewBox="0 0 8 5" fill="currentColor"><path d="M0 .3h8L4 4.700z" /></svg>
          </div>
        </header>
        <main className="flex flex-col gap-[10px] pt-[10px] pr-[7px] pl-[6px]">
          <StatusBar />
          <div className="grid h-[150px] grid-cols-3 gap-[10px]">
            <ValueCard title="PM10" value="19.80" color="text-[#2ea1fb]" />
            <ValueCard title="PM2.5" value="15.00" color="text-[#04dc78]" />
            <ValueCard title="PM1" value="10.80" color="text-[#a8d904]" />
          </div>
          <div className="grid h-[230px] grid-cols-3 gap-[10px]">
            <ChartCard {...small} title="PM10" x0={49.3} x1={615.2} yRight={36.3} yWidth={5.3}
              yLabels={['24.0', '21.0', '18.0', '15.0', '12.0', '9.0']}
              series={[{ color: '#d0e4f5', data: pm10b }, { color: '#2ea1fb', data: pm10a }]}
              legend={[{ label: 'PM10 1', color: '#2ea1fb', cx: 255, tx: 265, w: 40 }, { label: 'PM10 2', color: '#d0e4f5', cx: 322, tx: 330.6, w: 41 }]} />
            <ChartCard {...small} title="PM2.5" x0={55.5} x1={615.2} yRight={42.4} yWidth={5.4}
              yLabels={['24.00', '21.00', '18.00', '15.00', '12.00', '9.00', '6.00']}
              series={[{ color: '#9bf9cf', data: pm25b }, { color: '#04dc78', data: pm25a }]}
              legend={[{ label: 'PM2.5 1', color: '#04dc78', cx: 252, tx: 261, w: 44 }, { label: 'PM2.5 2', color: '#9bf9cf', cx: 322, tx: 331, w: 44.5 }]} />
            <ChartCard {...small} title="PM1" x0={49.2} x1={615.2} yRight={36.6} yWidth={5.3}
              yLabels={['18.0', '15.0', '12.0', '9.0', '6.0', '3.0']}
              series={[{ color: '#d6e8a0', data: pm1b }, { color: '#a8d904', data: pm1a }]}
              legend={[{ label: 'PM1 1', color: '#a8d904', cx: 262, tx: 271, w: 33.5 }, { label: 'PM1 2', color: '#d6e8a0', cx: 322, tx: 331, w: 34.5 }]} />
          </div>
          <div className="grid h-[290px] grid-cols-[937px_936px] gap-[10px]">
            <Card className="px-[6px] pt-[6px]"><MapView /></Card>
            <ChartCard title="Particulas" unit="Particulas/dL" width={936} height={290} x0={61.8} x1={930} top={71.700} bottom={234} shift={15}
              yRight={48.3} yWidth={5.5} yDrop={0.9} every={6} xLabels={threeHours} legendY={274} mark={155}
              yLabels={['2800.0', '2100.0', '1400.0', '700.0', '0.0']}
              series={[
                { color: '#c9b4cc', data: Array(96).fill(747.5), opacity: 1 },
                { color: '#d94fd9', data: part10 },
                { color: '#9b1fa0', data: part5 },
                { color: '#730078', data: part3 },
              ]}
              legend={[
                { label: '0.3 um', color: '#730078', cx: 306, tx: 315.3, w: 36 },
                { label: '0.5 um', color: '#9b1fa0', cx: 368, tx: 377.3, w: 36 },
                { label: '1 um', color: '#d95bdc', cx: 429, tx: 439.3, w: 26 },
                { label: '2.5 um', color: '#f48af4', cx: 481, tx: 490.7, w: 35.5 },
                { label: '5 um', color: '#d4a4d8', cx: 543, tx: 552.3, w: 26 },
                { label: '10 um', color: '#c0c0c0', cx: 595, tx: 604.3, w: 33 },
              ]} />
          </div>
        </main>
      </div>
      <Highlight />
    </div>
  );
}
